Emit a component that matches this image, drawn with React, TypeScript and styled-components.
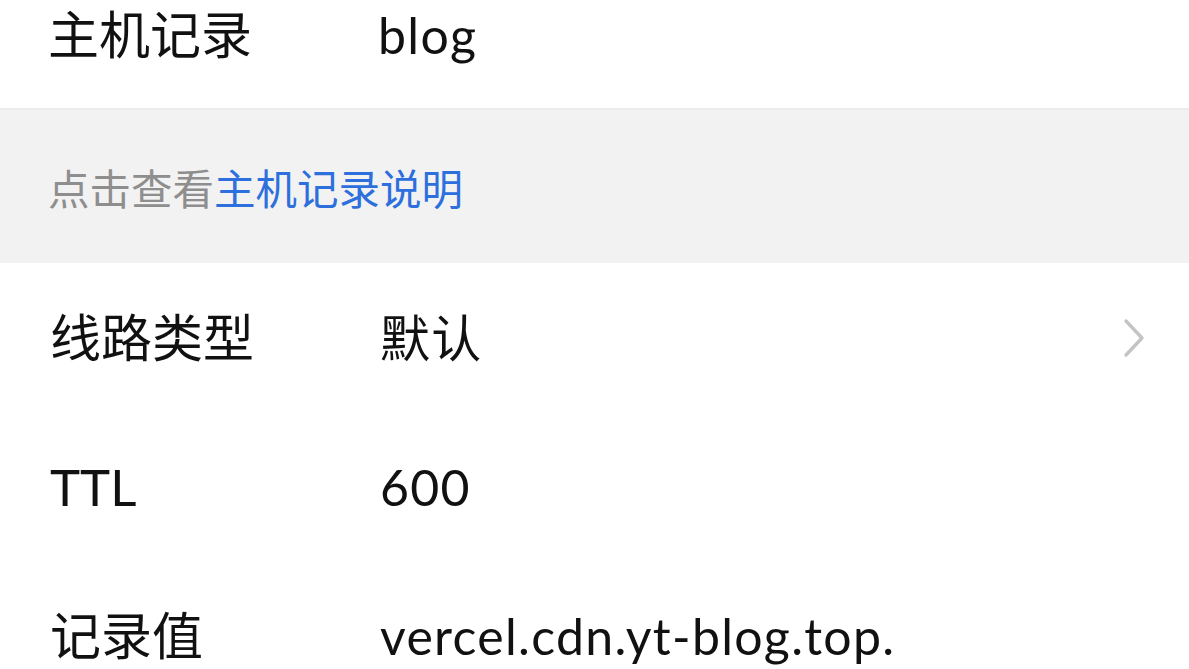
import styled, { createGlobalStyle } from 'styled-components';

const GlobalStyle = createGlobalStyle`
  html, body {
    margin: 0;
    padding: 0;
    background: #ffffff;
    overflow: hidden;
  }
  body {
    font-family: 'Lato', 'Noto Sans CJK SC', sans-serif;
    color: #111111;
  }
`;

type Field = {
  label: string;
  value: string;
  arrow?: boolean;
};

const topField: Field = { label: '主机记录', value: 'blog' };

const fields: Field[] = [
  { label: '线路类型', value: '默认', arrow: true },
  { label: 'TTL', value: '600' },
  { label: '记录值', value: 'vercel.cdn.yt-blog.top.' },
];

function Chevron() {
  return (
    <svg width="26" height="40" viewBox="0 0 26 40" fill="none">
      <path
        d="M5 3 L21 20 L5 37"
        stroke="#c4c4c4"
        strokeWidth="3.4"
        strokeLinecap="round"
        strokeLinejoin="round"
      />
    </svg>
  );
}

function App() {
  return (
    <>
      <GlobalStyle />
      <Screen>
        <List>
          <Row $divider>
            <Label>{topField.label}</Label>
            <Value>{topField.value}</Value>
          </Row>
        </List>
        <Hint>
          点击查看<HintLink>主机记录说明</HintLink>
        </Hint>
        <List>
          {fields.map((f) => (
            <Row key={f.label}>
              <Label>{f.label}</Label>
              <Value>{f.value}</Value>
              {f.arrow ? (
                <Arrow>
                  <Chevron />
                </Arrow>
              ) : (
                <span />
              )}
            </Row>
          ))}
        </List>
      </Screen>
    </>
  );
}

export default App;

const Screen = styled.div`
  width: 1189px;
  height: 669px;
  overflow: hidden;
  display: flex;
  flex-direction: column;
  /* scrolled list: first row is partly off screen */
  & > :first-child {
    margin-top: -39px;
  }
`;

const List = styled.div`
  display: flex;
  flex-direction: column;
  flex-shrink: 0;
  background: #ffffff;
`;

const Row = styled.div<{ $divider?: boolean }>`
  display: grid;
  grid-template-columns: 330px 1fr 80px;
  align-items: center;
  flex-shrink: 0;
  height: 149px;
  padding-left: 50px;
  box-sizing: border-box;
  border-bottom: ${(p) => (p.$divider ? '2px solid #ebebeb' : 'none')};
  margin-left: ${(p) => (p.$divider ? '-2px' : '0')};
`;

const Label = styled.div`
  font-family: 'Lato', 'Noto Sans CJK SC', sans-serif;
  font-size: 51px;
  line-height: 1;
  color: #111111;
`;

const Value = styled.div`
  font-family: 'Lato', 'Noto Sans CJK SC', sans-serif;
  font-size: 50px;
  letter-spacing: 1.3px;
  line-height: 1;
  color: #111111;
  white-space: nowrap;
`;

const Arrow = styled.div`
  display: flex;
  align-items: center;
  padding-left: 12px;
`;

const Hint = styled.div`
  background: #f2f2f2;
  height: 153px;
  flex-shrink: 0;
  display: flex;
  align-items: center;
  padding-left: 48px;
  font-family: 'Noto Sans CJK SC', sans-serif;
  font-size: 41.5px;
  color: #8e8e8e;
`;

const HintLink = styled.span`
  color: #2d6fdc;
`;
